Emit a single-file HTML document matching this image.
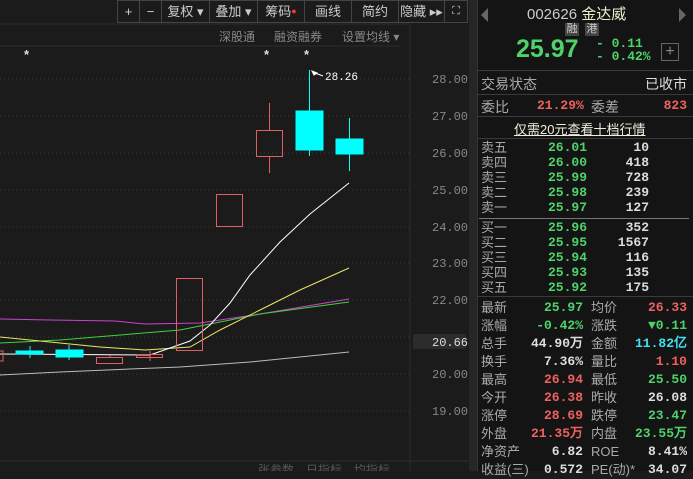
<!DOCTYPE html>
<html><head><meta charset="utf-8"><style>
*{margin:0;padding:0;box-sizing:border-box}
body{width:693px;height:471px;background:#1b1b1b;overflow:hidden;position:relative;font-family:"Liberation Sans","Noto Sans CJK SC",sans-serif;color:#bbb}
.a{position:absolute;white-space:nowrap}
.tb{position:absolute;top:0;height:23px;border:1px solid #444;color:#ccc;font-size:13px;line-height:21px;text-align:center;background:#1b1b1b}
.rp{position:absolute;left:477px;top:0;width:216px;height:471px;background:#141414;border-left:1px solid #333}
.hl{position:absolute;left:477px;width:216px;height:1px;background:#3a3a3a}
.g{color:#4ed36a}.r{color:#f06060}.w{color:#ddd}.c{color:#3fe0f0}
.lb{font-size:13px;color:#aaa}
.n{font-family:"Liberation Mono","DejaVu Sans Mono",monospace;font-size:13px;font-weight:bold}
</style></head><body>
<svg class="a" style="left:0;top:0" width="477" height="471">
<rect x="0" y="0" width="477" height="471" fill="#1b1b1b"/>
<line x1="0" y1="24" x2="410" y2="24" stroke="#2c2c2c"/>
<line x1="0" y1="46" x2="400" y2="46" stroke="#2c2c2c"/>
<line x1="410" y1="24" x2="410" y2="471" stroke="#2c2c2c"/>
<line x1="0" y1="461" x2="470" y2="461" stroke="#2c2c2c"/>
<g stroke="#3a3a3a" stroke-dasharray="1 3">
<line x1="0" y1="79" x2="410" y2="79"/><line x1="0" y1="116" x2="410" y2="116"/><line x1="0" y1="153" x2="410" y2="153"/><line x1="0" y1="190" x2="410" y2="190"/><line x1="0" y1="227" x2="410" y2="227"/><line x1="0" y1="263" x2="410" y2="263"/><line x1="0" y1="300" x2="410" y2="300"/><line x1="0" y1="337" x2="410" y2="337"/><line x1="0" y1="374" x2="410" y2="374"/><line x1="0" y1="411" x2="410" y2="411"/>
</g>
<g font-family="Liberation Mono,monospace" font-size="12" fill="#888">
<text x="432" y="83">28.00</text><text x="432" y="120">27.00</text><text x="432" y="157">26.00</text><text x="432" y="194">25.00</text><text x="432" y="231">24.00</text><text x="432" y="267">23.00</text><text x="432" y="304">22.00</text><text x="432" y="378">20.00</text><text x="432" y="415">19.00</text>
</g>
<rect x="413" y="334" width="53" height="15" rx="2" fill="#2c2c2c"/>
<text x="432" y="346" font-family="Liberation Mono,monospace" font-size="12" fill="#ddd">20.66</text>
<rect x="469" y="0" width="8" height="471" fill="#262626"/>
<g fill="none" stroke-width="1">
<polyline stroke="#bbb" points="0,375 60,372 130,369 180,367 250,362 349,352"/>
<polyline stroke="#d040d0" points="0,319 50,320 115,321 145,324 200,323 260,314 349,299"/>
<polyline stroke="#40d040" points="0,343 60,340 120,335 180,330 220,322 260,314 349,302"/>
<polyline stroke="#e8e860" points="0,337 40,341 100,347 145,350 190,347 220,330 260,310 300,290 349,268"/>
<polyline stroke="#fff" points="0,354 150,355 170,348 190,341 210,325 230,303 250,275 280,242 310,214 349,183"/>
</g>
<g stroke="#e06060" fill="none">
<rect x="-3" y="351" width="6" height="10"/>
<rect x="96.5" y="357.5" width="26" height="6"/>
<line x1="110" y1="355" x2="110" y2="357"/>
<rect x="136.5" y="354.5" width="26" height="3"/><line x1="150" y1="351" x2="150" y2="361"/>
<rect x="176.5" y="278.5" width="26" height="72"/>
<rect x="216.5" y="194.5" width="26" height="32"/>
<rect x="256.5" y="130.5" width="26" height="26"/><line x1="269.5" y1="103" x2="269.5" y2="130"/><line x1="269.5" y1="157" x2="269.5" y2="173"/>
</g>
<g fill="#00ffff" stroke="#00ffff">
<line x1="30" y1="346" x2="30" y2="358"/><rect x="16" y="351" width="27" height="3"/>
<line x1="69" y1="345" x2="69" y2="360"/><rect x="56" y="350" width="27" height="7"/>
<line x1="309.5" y1="70" x2="309.5" y2="156"/><rect x="296" y="111" width="27" height="39"/>
<line x1="349.5" y1="118" x2="349.5" y2="171"/><rect x="336" y="139" width="27" height="15"/>
</g>
<path d="M312 71 l5 2 l-3 2z M315 73 l8 3" stroke="#fff" fill="#fff"/>
<text x="325" y="80" font-family="Liberation Mono,monospace" font-size="11" fill="#fff">28.26</text>
<g font-size="13" fill="#ddd" font-weight="bold"><text x="24" y="59">*</text><text x="264" y="59">*</text><text x="304" y="59">*</text></g>
<g font-family="Liberation Sans,Noto Sans CJK SC,sans-serif" font-size="12" fill="#888">
<text x="219" y="41">深股通</text><text x="274" y="41">融资融券</text><text x="342" y="41">设置均线 ▾</text>
<text x="258" y="474" fill="#555">张参数　日指标　均指标</text>
</g>
</svg>
<div class="tb" style="left:117px;width:23px">+</div>
<div class="tb" style="left:139px;width:23px">−</div>
<div class="tb" style="left:161px;width:49px">复权 ▾</div>
<div class="tb" style="left:209px;width:49px">叠加 ▾</div>
<div class="tb" style="left:257px;width:48px">筹码<span style="color:#f33;font-size:9px;vertical-align:top">●</span></div>
<div class="tb" style="left:304px;width:48px">画线</div>
<div class="tb" style="left:351px;width:48px">简约</div>
<div class="tb" style="left:398px;width:47px">隐藏 ▸▸</div>
<div class="tb" style="left:444px;width:24px;font-size:11px">⛶</div>

<div class="rp"></div>
<div class="a" style="left:481px;top:8px;width:0;height:0;border-top:7px solid transparent;border-bottom:7px solid transparent;border-right:7px solid #666"></div>
<div class="a" style="left:679px;top:8px;width:0;height:0;border-top:7px solid transparent;border-bottom:7px solid transparent;border-left:7px solid #666"></div>
<div class="a" style="left:527px;top:3px;font-size:15px;color:#ccc">002626 <span style="color:#eec">金达威</span></div>
<div class="a" style="left:565px;top:23px;width:14px;height:13px;background:#444;color:#ccc;font-size:11px;line-height:13px;text-align:center">融</div>
<div class="a" style="left:585px;top:23px;width:14px;height:13px;background:#444;color:#ccc;font-size:11px;line-height:13px;text-align:center">港</div>
<div class="a g" style="left:516px;top:35px;font-size:25px;font-weight:bold">25.97</div>
<div class="a g n" style="left:596px;top:36px">- 0.11</div>
<div class="a g n" style="left:596px;top:49px">- 0.42%</div>
<div class="a" style="left:661px;top:43px;width:18px;height:18px;border:1px solid #666;color:#888;text-align:center;line-height:15px;font-size:16px">+</div>
<div class="hl" style="top:70px"></div>
<div class="a lb" style="left:481px;top:74px;font-size:14px">交易状态</div>
<div class="a lb" style="right:6px;top:74px;font-size:14px;color:#ddd">已收市</div>
<div class="hl" style="top:94px"></div>
<div class="a lb" style="left:481px;top:97px;font-size:14px">委比</div>
<div class="a r n" style="left:537px;top:98px">21.29%</div>
<div class="a lb" style="left:591px;top:97px;font-size:14px">委差</div>
<div class="a r n" style="right:6px;top:98px">823</div>
<div class="hl" style="top:116px"></div>
<div class="a" style="left:514px;top:119px;font-size:13px;color:#eed;text-decoration:underline">仅需20元查看十档行情</div>
<div class="hl" style="top:138px"></div>
<div class="a lb" style="left:481px;top:140px;line-height:15px;font-size:13px">卖五<br>卖四<br>卖三<br>卖二<br>卖一</div>
<div class="a g n" style="left:548px;top:140px;line-height:15px">26.01<br>26.00<br>25.99<br>25.98<br>25.97</div>
<div class="a w n" style="right:44px;top:140px;line-height:15px;text-align:right">10<br>418<br>728<br>239<br>127</div>
<div class="a" style="left:479px;top:218px;width:210px;height:1px;background:#777"></div>
<div class="a lb" style="left:481px;top:220px;line-height:15px;font-size:13px">买一<br>买二<br>买三<br>买四<br>买五</div>
<div class="a g n" style="left:548px;top:220px;line-height:15px">25.96<br>25.95<br>25.94<br>25.93<br>25.92</div>
<div class="a w n" style="right:44px;top:220px;line-height:15px;text-align:right">352<br>1567<br>116<br>135<br>175</div>
<div class="hl" style="top:296px"></div>
<div class="a lb" style="left:481px;top:299px;line-height:18px;font-size:13px">最新<br>涨幅<br>总手<br>换手<br>最高<br>今开<br>涨停<br>外盘<br>净资产<br>收益(三)</div>
<div class="a n" style="right:110px;top:299px;line-height:18px;text-align:right"><span class="g">25.97</span><br><span class="g">-0.42%</span><br><span class="w">44.90万</span><br><span class="w">7.36%</span><br><span class="r">26.94</span><br><span class="r">26.38</span><br><span class="r">28.69</span><br><span class="r">21.35万</span><br><span class="w">6.82</span><br><span class="w">0.572</span></div>
<div class="a lb" style="left:591px;top:299px;line-height:18px;font-size:13px">均价<br>涨跌<br>金额<br>量比<br>最低<br>昨收<br>跌停<br>内盘<br>ROE<br>PE(动)*</div>
<div class="a n" style="right:6px;top:299px;line-height:18px;text-align:right"><span class="r">26.33</span><br><span class="g">▼0.11</span><br><span class="c">11.82亿</span><br><span class="r">1.10</span><br><span class="g">25.50</span><br><span class="w">26.08</span><br><span class="g">23.47</span><br><span class="g">23.55万</span><br><span class="w">8.41%</span><br><span class="w">34.07</span></div>
</body></html>
